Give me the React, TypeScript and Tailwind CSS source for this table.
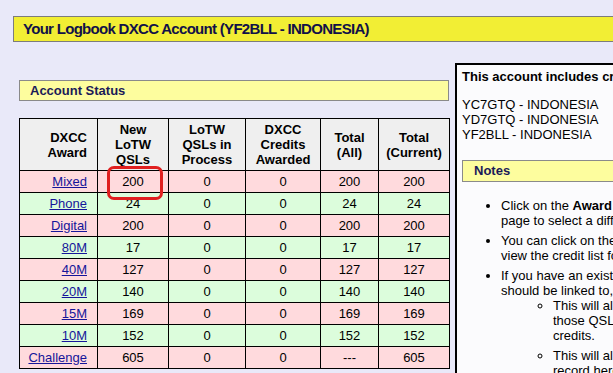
import React from "react";

type Row = {
  award: string;
  vals: string[];
  tone: "pink" | "green";
};

const rows: Row[] = [
  { award: "Mixed", vals: ["200", "0", "0", "200", "200"], tone: "pink" },
  { award: "Phone", vals: ["24", "0", "0", "24", "24"], tone: "green" },
  { award: "Digital", vals: ["200", "0", "0", "200", "200"], tone: "pink" },
  { award: "80M", vals: ["17", "0", "0", "17", "17"], tone: "green" },
  { award: "40M", vals: ["127", "0", "0", "127", "127"], tone: "pink" },
  { award: "20M", vals: ["140", "0", "0", "140", "140"], tone: "green" },
  { award: "15M", vals: ["169", "0", "0", "169", "169"], tone: "pink" },
  { award: "10M", vals: ["152", "0", "0", "152", "152"], tone: "green" },
  { award: "Challenge", vals: ["605", "0", "0", "---", "605"], tone: "pink" },
];

const colWidths = ["w-[78px]", "w-[71px]", "w-[77px]", "w-[75px]", "w-[58px]", "w-[71px]"];

export default function App() {
  return (
    <div className="w-[613px] h-[373px] overflow-hidden bg-[#e9e9f9] font-['Liberation_Sans',Arial,sans-serif] text-[13px] text-black">
      {/* Page title */}
      <div className="pt-[16px] pl-[13px]">
        <div className="w-[720px] h-[26px] border border-[#7c7c7c] bg-[#f2ee34] pl-[9px] text-[15px] tracking-[-0.7px] font-bold leading-[24px] text-[#111148]">
          Your Logbook DXCC Account (YF2BLL - INDONESIA)
        </div>
      </div>

      <div className="flex mt-[21px]">
        {/* Left column */}
        <div className="ml-[19px] w-[430px] shrink-0 pt-[17px]">
          <div className="h-[21px] border border-[#8a8a8a] bg-[#fdfd9e] pl-[10px] font-bold leading-[19px] text-[#1a1a58]">
            Account Status
          </div>

          <div className="relative mt-[17px]">
            <table className="w-[430px] border-collapse border border-black table-fixed">
              <thead>
                <tr className="h-[52px] bg-[#efefef] font-bold leading-[15px]">
                  <th className={`${colWidths[0]} border border-black text-right pr-[10px]`}>
                    DXCC
                    <br />
                    Award
                  </th>
                  <th className={`${colWidths[1]} border border-black text-center`}>
                    New
                    <br />
                    LoTW
                    <br />
                    QSLs
                  </th>
                  <th className={`${colWidths[2]} border border-black text-center`}>
                    LoTW
                    <br />
                    QSLs in
                    <br />
                    Process
                  </th>
                  <th className={`${colWidths[3]} border border-black text-center`}>
                    DXCC
                    <br />
                    Credits
                    <br />
                    Awarded
                  </th>
                  <th className={`${colWidths[4]} border border-black text-center`}>
                    Total
                    <br />
                    (All)
                  </th>
                  <th className={`${colWidths[5]} border border-black text-center`}>
                    Total
                    <br />
                    (Current)
                  </th>
                </tr>
              </thead>
              <tbody>
                {rows.map((r) => (
                  <tr
                    key={r.award}
                    className={`h-[22px] ${r.tone === "pink" ? "bg-[#ffdadd]" : "bg-[#dcfddc]"}`}
                  >
                    <td className="border border-black text-right pr-[10px] p-0">
                      <a href="#" className="text-[#15159a] underline">
                        {r.award}
                      </a>
                    </td>
                    {r.vals.map((v, i) => (
                      <td key={i} className="border border-black text-center p-0">
                        {v}
                      </td>
                    ))}
                  </tr>
                ))}
              </tbody>
            </table>

            {/* red highlight drawn over the Mixed / New LoTW cell */}
            <div className="absolute left-[88px] top-[48px] w-[56px] h-[34px] border-[3px] border-[#e01f1f] rounded-[7px]" />

            <div className="mt-[3px] pl-[134px] text-[13px] leading-[15px]">
              * = Award has been issued or endorsed
            </div>
          </div>
        </div>

        {/* Right column */}
        <div className="ml-[6px] w-[420px] shrink-0 h-[400px] border-2 border-black bg-[#fbfbfd] px-[5px] pt-[4px] whitespace-nowrap">
          <div className="font-bold leading-[15px]">This account includes credits from these callsigns:</div>
          <div className="mt-[13px] leading-[15px]">
            <div>YC7GTQ - INDONESIA</div>
            <div>YD7GTQ - INDONESIA</div>
            <div>YF2BLL - INDONESIA</div>
          </div>

          <div className="mt-[18px] h-[22px] border border-[#8a8a8a] bg-[#fdfd9e] pl-[11px] font-bold leading-[20px] text-[#1a1a58]">
            Notes
          </div>

          <ul className="mt-[16px] list-disc pl-[39px] leading-[15px]">
            <li className="mb-[5px]">
              Click on the <b>Award</b> name in the table above to go to the award
              <br />
              page to select a different view.
            </li>
            <li className="mb-[5px]">
              You can click on the numbers in the table to
              <br />
              view the credit list for that award.
            </li>
            <li>
              If you have an existing DXCC account which
              <br />
              should be linked to, please contact ARRL:
              <ul className="list-[circle] pl-[52px] mt-0">
                <li className="mb-[5px]">
                  This will allow your existing DXCC
                  <br />
                  those QSLs to be counted in your
                  <br />
                  credits.
                </li>
                <li>
                  This will also bring your DXCC
                  <br />
                  record here so you can view it.
                </li>
              </ul>
            </li>
          </ul>
        </div>
      </div>
    </div>
  );
}
